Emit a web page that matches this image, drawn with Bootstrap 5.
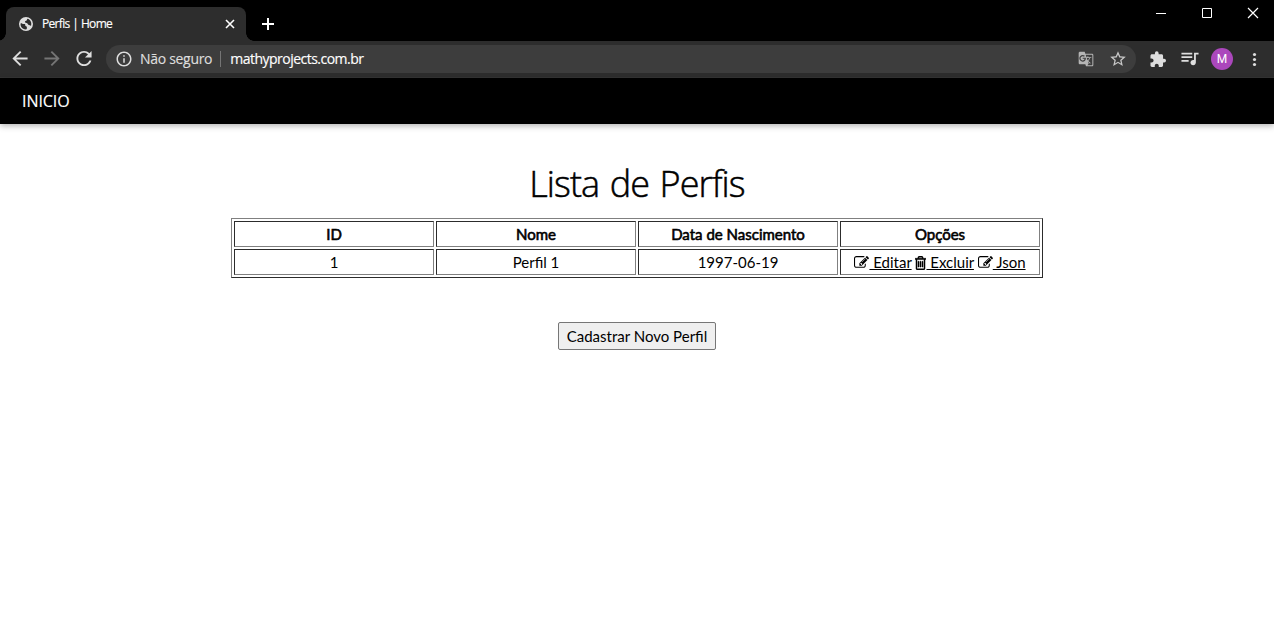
<!DOCTYPE html>
<html lang="pt-BR">
<head>
<meta charset="utf-8">
<title>Perfis | Home</title>
<link href="https://cdn.jsdelivr.net/npm/bootstrap@5.3.0/dist/css/bootstrap.min.css" rel="stylesheet">
<style>
body{font-family:Lato,"Liberation Sans",sans-serif;font-size:15px;line-height:24px;color:#000;background:#fff;height:640px;overflow:hidden}
svg{fill:currentColor;display:block;flex:none}
.chrome-ui{font-family:"Open Sans","Noto Sans",sans-serif;color:#dedede}
.tab-strip{height:41px;background:#000}
.active-tab{width:240px;height:34px;margin:7px 0 0 6px;background:#2d2d2d;border-radius:8px 8px 0 0;padding:0 10px 0 12px;color:#dedede}
.active-tab::before,.active-tab::after{content:"";position:absolute;bottom:0;width:8px;height:8px}
.active-tab::before{left:-8px;background:radial-gradient(circle at 0 0,transparent 7.5px,#2d2d2d 8px)}
.active-tab::after{right:-8px;background:radial-gradient(circle at 100% 0,transparent 7.5px,#2d2d2d 8px)}
.tab-title{font-size:12px;line-height:16px;margin-left:8px;letter-spacing:-.68px;word-spacing:.3px;color:#fff;-webkit-text-stroke:.15px}
.new-tab{margin:17px 0 0 15px;color:#fff}
.window-btns{color:#fff;padding:7px 15px 0 0;gap:34px}
.outlined{fill:none}
.toolbar-row{height:37px;background:#2d2d2d;padding-left:11px;border-bottom:1px solid #353535}
.omnibox{width:1030px;height:28px;border-radius:14px;background:#3d3d3d;margin-left:13px;padding:0 9px;font-size:14px;-webkit-text-stroke:.15px}
.omni-sep{width:1px;height:16px;background:#757575;margin:0 9px 0 8px}
.insecure{margin-left:7px;letter-spacing:-.3px}
.host{color:#fff;letter-spacing:-.52px}
.avatar-m{width:22px;height:22px;background:#ab47bc;color:#fff;font:12px/22px Roboto,sans-serif}
.site-bar{height:46px;background:#000;box-shadow:0 2px 6px rgba(0,0,0,.3);font-family:"Open Sans",sans-serif;font-size:16px;padding-left:22px}
.site-bar a{color:#fff;letter-spacing:-.05px;-webkit-text-stroke:.15px}
.page-title{font-family:"Open Sans",sans-serif;font-weight:300;font-size:36px;line-height:48px;letter-spacing:-.9px;word-spacing:2px;-webkit-text-stroke:.5px;margin:36px 0 10px}
.profiles{width:812px;border:1px solid;border-color:#808080 #2c2c2c #2c2c2c #808080;border-collapse:separate;border-spacing:2px;table-layout:fixed}
.profiles th,.profiles td{height:26px;padding:0;text-align:center;line-height:24px;border:1px solid;border-color:#2c2c2c #808080 #808080 #2c2c2c}
.profiles th{font-weight:400;-webkit-text-stroke:.6px}
.profiles a{color:#000}
.fa-ic{display:inline-block;vertical-align:-2px}
.new-profile{margin-top:44px;width:158px;height:28px;border:1px solid #767676;border-radius:2px;background:#efefef;padding:0;color:#000;white-space:nowrap}
</style>
</head>
<body>
<header class="chrome-ui">
  <div class="tab-strip d-flex align-items-start">
    <div class="active-tab position-relative d-flex align-items-center">
      <svg width="16" height="16" viewBox="0 0 24 24"><path d="M12 1.500A10.500 10.500 0 1 0 12 22.500A10.500 10.500 0 0 0 12 1.500zM4 11c2 1 3 1 5 1 2 0 2 1 2 3 2 0 3 1 2 5C7 21 3 16 4 11zM14 4c5 1 7 6 5.500 11-1-2-3-1-4-2-1-2-2-3-4-3-2-1-1-3 1-3 1-1 1-2 1.500-3z" fill-rule="evenodd"/></svg>
      <span class="tab-title">Perfis | Home</span>
      <svg class="ms-auto" width="12" height="12" viewBox="0 0 12 12" stroke="#fff" stroke-width="1.600"><path d="M2 2l8 8M10 2l-8 8"/></svg>
    </div>
    <svg class="new-tab" width="14" height="14" viewBox="0 0 14 14" stroke="#fff" stroke-width="2"><path d="M7 1v12M1 7h12"/></svg>
    <div class="window-btns d-flex ms-auto">
      <svg width="12" height="12" viewBox="0 0 12 12" stroke="#fff"><path d="M1 6.500h10"/></svg>
      <svg class="outlined" width="12" height="12" viewBox="0 0 12 12" stroke="#fff"><path d="M1.500 1.500h9v9h-9z"/></svg>
      <svg width="12" height="12" viewBox="0 0 12 12" stroke="#fff" stroke-width="1.200"><path d="M1 1l10 10M11 1L1 11"/></svg>
    </div>
  </div>
  <div class="toolbar-row d-flex align-items-center">
    <svg width="18" height="18" viewBox="2.500 3 19 19"><path d="M20 11H7.830l5.590-5.590L12 4l-8 8 8 8 1.410-1.410L7.830 13H20z"/></svg>
    <svg style="margin-left:14px;color:#757575" width="18" height="18" viewBox="2.500 3 19 19"><path d="M12 4l-1.410 1.410L16.170 11H4v2h12.170l-5.580 5.590L12 20l8-8z"/></svg>
    <svg style="margin-left:14px" width="18" height="18" viewBox="2.500 3 19 19"><path d="M17.650 6.350C16.200 4.900 14.210 4 12 4c-4.420 0-7.990 3.580-7.990 8s3.570 8 7.990 8c3.730 0 6.840-2.550 7.730-6h-2.080c-.82 2.330-3.040 4-5.650 4-3.310 0-6-2.690-6-6s2.690-6 6-6c1.660 0 3.140.69 4.220 1.780L13 11h7V4z"/></svg>
    <div class="omnibox d-flex align-items-center">
      <svg width="18" height="18" viewBox="0 0 24 24"><path d="M11 7h2v2h-2zm0 4h2v6h-2zm1-9C6.480 2 2 6.480 2 12s4.480 10 10 10 10-4.480 10-10S17.520 2 12 2zm0 18c-4.410 0-8-3.590-8-8s3.590-8 8-8 8 3.590 8 8-3.590 8-8 8z"/></svg>
      <span class="insecure">Não seguro</span><span class="omni-sep"></span><span class="host">mathyprojects.com.br</span>
      <svg class="ms-auto" style="color:#b5b5b5" width="16" height="16" viewBox="0 0 24 24"><path d="M21 4H11l-1-3H3c-1.100 0-2 .9-2 2v15c0 1.100.9 2 2 2h8l1 3h9c1.100 0 2-.9 2-2V6c0-1.100-.9-2-2-2zM7 16c-2.760 0-5-2.240-5-5s2.240-5 5-5c1.350 0 2.480.5 3.350 1.300L9.030 8.570c-.38-.36-1.040-.78-2.030-.78-1.740 0-3.150 1.440-3.150 3.210S5.260 14.210 7 14.210c2.010 0 2.840-1.440 2.920-2.410H7v-1.710h4.680c.07.31.12.61.12 1.020C11.800 13.970 9.890 16 7 16zm6.170-5.420h3.700c-.43 1.250-1.110 2.430-2.050 3.470-.31-.35-.6-.72-.86-1.100zm8.330 9.920c0 .55-.45 1-1 1H14l2-2.500-1.040-3.100 3.100 3.100.92-.92-3.300-3.250.02-.02c1.130-1.250 1.930-2.690 2.400-4.220H20v-1.300h-4.530V8h-1.290v1.290h-1.440L11.460 5.500h9.040c.55 0 1 .45 1 1z"/></svg>
      <svg style="margin-left:15px;color:#c8c8c8" width="18" height="18" viewBox="0.500 0.500 23 23"><path d="M22 9.240l-7.190-.62L12 2 9.190 8.630 2 9.240l5.460 4.730L5.820 21 12 17.270 18.180 21l-1.630-7.030zM12 15.400l-3.760 2.270 1-4.280-3.320-2.880 4.380-.38L12 6.100l1.710 4.040 4.380.38-3.320 2.880 1 4.280z"/></svg>
    </div>
    <svg style="margin-left:13px" width="17" height="17" viewBox="0 0.500 23 23"><path d="M20.500 11H19V7c0-1.100-.9-2-2-2h-4V3.500a2.500 2.500 0 0 0-5 0V5H4c-1.100 0-2 .9-2 2v3.800h1.500c1.490 0 2.700 1.210 2.700 2.700s-1.210 2.700-2.700 2.700H2V20c0 1.100.9 2 2 2h3.800v-1.500c0-1.490 1.210-2.700 2.700-2.700s2.700 1.210 2.700 2.700V22H17c1.100 0 2-.9 2-2v-4h1.500a2.500 2.500 0 0 0 0-5z"/></svg>
    <svg style="margin-left:15px" width="18" height="18" viewBox="2.500 3 20 20"><path d="M15 6H3v2h12zm0 4H3v2h12zM3 16h8v-2H3zM17 6v8.180c-.31-.11-.65-.18-1-.18-1.660 0-3 1.340-3 3s1.340 3 3 3 3-1.340 3-3V8h3V6z"/></svg>
    <div class="avatar-m rounded-circle text-center" style="margin-left:12px">M</div>
    <svg style="margin-left:13px" width="18" height="18" viewBox="0.500 -0.500 18 18"><circle cx="9" cy="4" r="1.600"/><circle cx="9" cy="9" r="1.600"/><circle cx="9" cy="14" r="1.600"/></svg>
  </div>
</header>
<nav class="site-bar d-flex align-items-center"><a class="text-decoration-none" href="#">INICIO</a></nav>
<main class="d-flex flex-column align-items-center">
  <h1 class="page-title">Lista de Perfis</h1>
  <table class="profiles">
    <tr><th>ID</th><th>Nome</th><th>Data de Nascimento</th><th>Opções</th></tr>
    <tr><td>1</td><td>Perfil 1</td><td>1997-06-19</td>
      <td><a href="#"><svg class="fa-ic" width="15" height="15" viewBox="0 0 1792 1792"><path id="pencil" d="M888 1184l116-116-152-152-116 116v56h96v96h56zm440-720q-16-16-33 1l-350 350q-17 17-1 33t33-1l350-350q17-17 1-33zm80 594v190q0 119-84.500 203.500t-203.500 84.500h-832q-119 0-203.500-84.500t-84.500-203.500v-832q0-119 84.500-203.500t203.500-84.500h832q63 0 117 25 15 7 18 23 3 17-9 29l-49 49q-14 14-32 8-23-6-45-6h-832q-66 0-113 47t-47 113v832q0 66 47 113t113 47h832q66 0 113-47t47-113v-126q0-13 9-22l64-64q15-15 35-7t20 29zm-96-738l288 288-672 672h-288v-288zm444 132l-92 92-288-288 92-92q28-28 68-28t68 28l152 152q28 28 28 68t-28 68z"/></svg> Editar</a>
      <a href="#"><svg class="fa-ic" width="11" height="14" viewBox="192 128 1408 1536" preserveAspectRatio="none"><path stroke="#000" stroke-width="60" d="M704 736v576q0 14-9 23t-23 9h-64q-14 0-23-9t-9-23v-576q0-14 9-23t23-9h64q14 0 23 9t9 23zm256 0v576q0 14-9 23t-23 9h-64q-14 0-23-9t-9-23v-576q0-14 9-23t23-9h64q14 0 23 9t9 23zm256 0v576q0 14-9 23t-23 9h-64q-14 0-23-9t-9-23v-576q0-14 9-23t23-9h64q14 0 23 9t9 23zm128 724v-948h-896v948q0 22 7 40.500t14.500 27 10.500 8.500h832q3 0 10.500-8.500t14.500-27 7-40.500zm-672-1076h448l-48-117q-7-9-17-11h-317q-10 2-17 11zm928 32v64q0 14-9 23t-23 9h-96v948q0 83-47 143.500t-113 60.500h-832q-66 0-113-58.500t-47-141.500v-952h-96q-14 0-23-9t-9-23v-64q0-14 9-23t23-9h309l70-167q15-37 54-63t79-26h320q40 0 79 26t54 63l70 167h309q14 0 23 9t9 23z"/></svg> Excluir</a>
      <a href="#"><svg class="fa-ic" width="15" height="15" viewBox="0 0 1792 1792"><use href="#pencil"/></svg> Json</a></td></tr>
  </table>
  <button class="new-profile">Cadastrar Novo Perfil</button>
</main>
<script src="https://cdn.jsdelivr.net/npm/bootstrap@5.3.0/dist/js/bootstrap.bundle.min.js"></script>
</body>
</html>
